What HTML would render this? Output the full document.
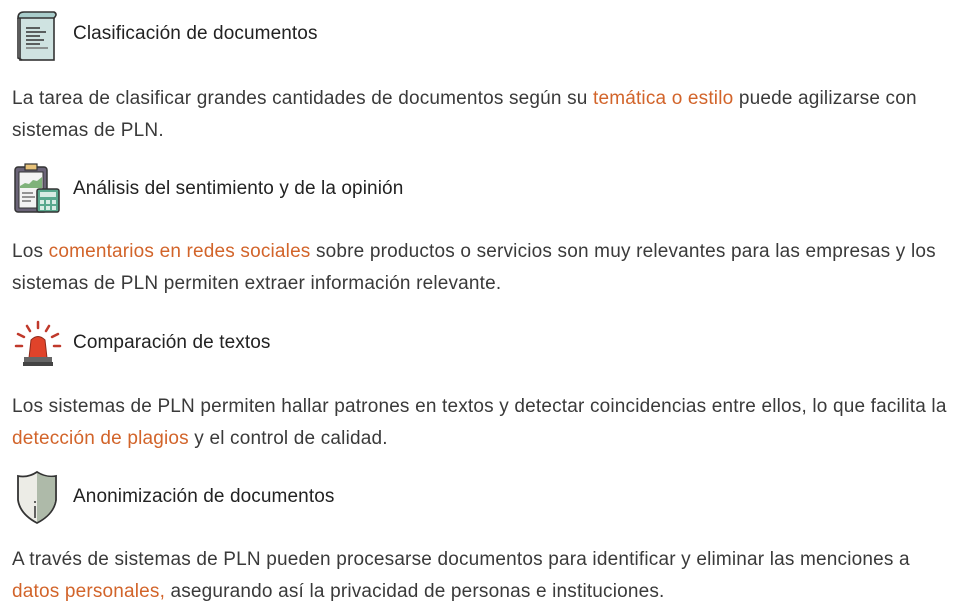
<!DOCTYPE html>
<html><head><meta charset="utf-8"><style>
body{margin:0;width:964px;height:615px;background:#fff;position:relative;overflow:hidden;font-family:"Liberation Sans",Arial,sans-serif;}
.h{position:absolute;left:73px;font-size:19px;color:#222;letter-spacing:0.1px;line-height:24px;white-space:nowrap}
.p{position:absolute;left:12px;font-size:19px;color:#3a3a3a;line-height:31.5px;white-space:nowrap;letter-spacing:0.18px}
.o{color:#d2642a}
svg{position:absolute}
</style></head><body>
<svg style="left:14px;top:8px" width="44" height="54" viewBox="0 0 44 54">
<rect x="6" y="6" width="34" height="46" fill="#cfe3e1" stroke="#333" stroke-width="1.6"/>
<path d="M4 10 Q4 4 10 4 L40 4 Q44 6 40 10 L10 10 Z" fill="#a9cdcb" stroke="#333" stroke-width="1.6"/>
<path d="M4 10 L4 50 L8 52" fill="none" stroke="#333" stroke-width="1.6"/>
<g stroke="#333" stroke-width="1.5"><line x1="12" y1="20" x2="26" y2="20"/><line x1="12" y1="24" x2="32" y2="24"/><line x1="12" y1="28" x2="26" y2="28"/><line x1="12" y1="32" x2="30" y2="32"/><line x1="12" y1="36" x2="26" y2="36"/><line x1="12" y1="40" x2="34" y2="40" stroke="#777"/></g>
</svg>
<div class="h" style="top:22px">Clasificación de documentos</div>
<div class="p" style="top:83px">La tarea de clasificar grandes cantidades de documentos según su <span class="o">temática o estilo</span> puede agilizarse con<br>sistemas de PLN.</div>

<svg style="left:13px;top:162px" width="48" height="52" viewBox="0 0 48 52">
<rect x="2" y="5" width="32" height="45" rx="3" fill="#6b6478" stroke="#333" stroke-width="1.5"/>
<rect x="6" y="10" width="24" height="36" fill="#f3f3f3" stroke="#333" stroke-width="1"/>
<rect x="12" y="2" width="12" height="6" fill="#e7c27a" stroke="#333" stroke-width="1.2"/>
<path d="M7 24 L12 21 L16 22 L20 18 L24 19 L29 15 L29 26 L7 26Z" fill="#7fb27a"/>
<g stroke="#555" stroke-width="1.2"><line x1="9" y1="31" x2="20" y2="31"/><line x1="9" y1="35" x2="22" y2="35"/><line x1="9" y1="39" x2="18" y2="39"/></g>
<rect x="24" y="27" width="22" height="23" rx="2" fill="#5aa88e" stroke="#333" stroke-width="1.5"/>
<rect x="27" y="30" width="16" height="5" fill="#d9ebe4"/>
<g fill="#d9ebe4"><rect x="27" y="38" width="4" height="4"/><rect x="33" y="38" width="4" height="4"/><rect x="39" y="38" width="4" height="4"/><rect x="27" y="44" width="4" height="4"/><rect x="33" y="44" width="4" height="4"/><rect x="39" y="44" width="4" height="4"/></g>
</svg>
<div class="h" style="top:177px">Análisis del sentimiento y de la opinión</div>
<div class="p" style="top:236px">Los <span class="o">comentarios en redes sociales</span> sobre productos o servicios son muy relevantes para las empresas y los<br>sistemas de PLN permiten extraer información relevante.</div>

<svg style="left:14px;top:320px" width="48" height="48" viewBox="0 0 48 48">
<g stroke="#c0392b" stroke-width="2.5" stroke-linecap="round"><line x1="24" y1="2" x2="24" y2="8"/><line x1="13" y1="6" x2="16" y2="11"/><line x1="35" y1="6" x2="32" y2="11"/><line x1="4" y1="14" x2="10" y2="17"/><line x1="44" y1="14" x2="38" y2="17"/><line x1="2" y1="26" x2="8" y2="26"/><line x1="46" y1="26" x2="40" y2="26"/></g>
<path d="M15 38 L17 20 Q24 13 31 20 L33 38Z" fill="#e0432a" stroke="#8e2a1b" stroke-width="1"/>
<rect x="10" y="37" width="28" height="5" fill="#666"/>
<rect x="9" y="42" width="30" height="4" fill="#444"/>
</svg>
<div class="h" style="top:331px">Comparación de textos</div>
<div class="p" style="top:391px">Los sistemas de PLN permiten hallar patrones en textos y detectar coincidencias entre ellos, lo que facilita la<br><span class="o">detección de plagios</span> y el control de calidad.</div>

<svg style="left:14px;top:470px" width="46" height="56" viewBox="0 0 46 56">
<path d="M4 6 Q14 8 23 2 Q32 8 42 6 L42 30 Q40 44 23 53 Q6 44 4 30Z" fill="#ecece6" stroke="#333" stroke-width="1.8"/>
<path d="M23 3 Q32 8 41 7 L41 30 Q39 44 23 52Z" fill="#aebaa9"/>
<line x1="21" y1="36" x2="21" y2="48" stroke="#333" stroke-width="1.5"/><circle cx="21" cy="32" r="1" fill="#333"/>
</svg>
<div class="h" style="top:485px">Anonimización de documentos</div>
<div class="p" style="top:544px">A través de sistemas de PLN pueden procesarse documentos para identificar y eliminar las menciones a<br><span class="o">datos personales,</span> asegurando así la privacidad de personas e instituciones.</div>
</body></html>
